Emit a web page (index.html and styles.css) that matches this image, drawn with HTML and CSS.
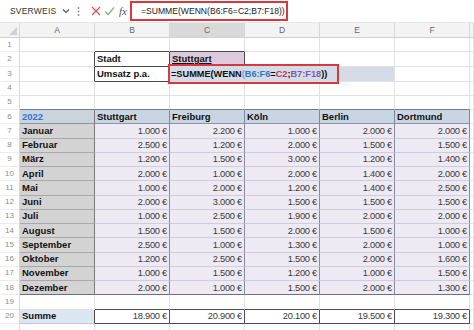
FILE: index.html
```html
<!DOCTYPE html>
<html lang="de">
	<head>
		<meta charset="UTF-8" />
		<meta name="viewport" content="width=device-width, initial-scale=1.0" />
		<title>SUMME WENN</title>
		<link rel="stylesheet" href="styles.css">
	</head>
	<body>
		<div class="fbar">
			<div class="namebox">
				<span>SVERWEIS</span>
				<svg class="chev" width="8" height="6" viewBox="0 0 8 6"><polyline points="1,1.5 4,4.5 7,1.5" fill="none" stroke="#555" stroke-width="1.2"/></svg>
			</div>
			<svg class="dots" width="3" height="11" viewBox="0 0 3 11"><circle cx="1.5" cy="2" r="0.9" fill="#888"/><circle cx="1.5" cy="5.5" r="0.9" fill="#888"/><circle cx="1.5" cy="9" r="0.9" fill="#888"/></svg>
			<svg class="ico x" width="10" height="10" viewBox="0 0 10 10"><path d="M1 1L9 9M9 1L1 9" stroke="#d9534f" stroke-width="1.2"/></svg>
			<svg class="ico ok" width="11" height="10" viewBox="0 0 11 10"><polyline points="1,5.5 4,8.5 10,1.5" fill="none" stroke="#7cb86a" stroke-width="1.2"/></svg>
			<span class="fx">fx</span>
			<div class="finput">=SUMME(WENN(B6:F6=C2;B7:F18))</div>
		</div>

		<table class="sheet">
			<colgroup>
				<col class="c-rn" />
				<col class="c-col" /><col class="c-col" /><col class="c-col" />
				<col class="c-col" /><col class="c-col" /><col class="c-col" />
				<col class="c-rest" />
			</colgroup>
			<tr class="colhead">
				<td class="corner"><svg width="8" height="8" viewBox="0 0 8 8"><polygon points="8,0 8,8 0,8" fill="#d0d0d0"/></svg></td>
				<td>A</td><td>B</td><td class="sel">C</td><td>D</td><td>E</td><td>F</td><td></td>
			</tr>
			<tr><td class="rn">1</td><td></td><td class="b-bot"></td><td class="b-bot"></td><td></td><td></td><td></td><td></td></tr>
			<tr><td class="rn">2</td><td class="b-right"></td><td class="box lbl">Stadt</td><td class="city lbl">Stuttgart</td><td></td><td></td><td></td><td></td></tr>
			<tr class="row3"><td class="rn">3</td><td class="b-right"></td><td class="box lbl">Umsatz p.a.</td>
				<td class="formula" colspan="3"><span class="fbox">=SUMME(WENN<span class="p">(</span><span class="r1">B6:F6</span>=<span class="r2">C2</span>;<span class="r3">B7:F18</span>))</span></td><td></td><td></td></tr>
			<tr><td class="rn">4</td><td></td><td></td><td></td><td></td><td></td><td></td><td></td></tr>
			<tr class="row5"><td class="rn">5</td><td></td><td></td><td></td><td></td><td></td><td></td><td></td></tr>
			<tr class="head"><td class="rn">6</td><td class="m year"><span>2022</span></td><td class="h">Stuttgart</td><td class="h">Freiburg</td><td class="h">Köln</td><td class="h">Berlin</td><td class="h">Dortmund</td><td></td></tr>
			<tr><td class="rn">7</td><td class="m">Januar</td><td class="v">1.000 €</td><td class="v">2.200 €</td><td class="v">1.000 €</td><td class="v">2.000 €</td><td class="v">2.000 €</td><td></td></tr>
			<tr><td class="rn">8</td><td class="m">Februar</td><td class="v">2.500 €</td><td class="v">1.200 €</td><td class="v">2.000 €</td><td class="v">1.500 €</td><td class="v">1.500 €</td><td></td></tr>
			<tr><td class="rn">9</td><td class="m">März</td><td class="v">1.200 €</td><td class="v">1.500 €</td><td class="v">3.000 €</td><td class="v">1.200 €</td><td class="v">1.400 €</td><td></td></tr>
			<tr><td class="rn">10</td><td class="m">April</td><td class="v">2.000 €</td><td class="v">1.000 €</td><td class="v">2.000 €</td><td class="v">1.400 €</td><td class="v">2.000 €</td><td></td></tr>
			<tr><td class="rn">11</td><td class="m">Mai</td><td class="v">1.000 €</td><td class="v">2.000 €</td><td class="v">1.200 €</td><td class="v">1.400 €</td><td class="v">2.500 €</td><td></td></tr>
			<tr><td class="rn">12</td><td class="m">Juni</td><td class="v">2.000 €</td><td class="v">3.000 €</td><td class="v">1.500 €</td><td class="v">1.500 €</td><td class="v">1.500 €</td><td></td></tr>
			<tr><td class="rn">13</td><td class="m">Juli</td><td class="v">1.000 €</td><td class="v">2.500 €</td><td class="v">1.900 €</td><td class="v">2.000 €</td><td class="v">2.000 €</td><td></td></tr>
			<tr><td class="rn">14</td><td class="m">August</td><td class="v">1.500 €</td><td class="v">1.500 €</td><td class="v">2.000 €</td><td class="v">1.500 €</td><td class="v">1.000 €</td><td></td></tr>
			<tr><td class="rn">15</td><td class="m">September</td><td class="v">2.500 €</td><td class="v">1.000 €</td><td class="v">1.300 €</td><td class="v">2.000 €</td><td class="v">1.000 €</td><td></td></tr>
			<tr><td class="rn">16</td><td class="m">Oktober</td><td class="v">1.200 €</td><td class="v">2.500 €</td><td class="v">1.500 €</td><td class="v">2.000 €</td><td class="v">1.600 €</td><td></td></tr>
			<tr><td class="rn">17</td><td class="m">November</td><td class="v">1.000 €</td><td class="v">1.500 €</td><td class="v">1.200 €</td><td class="v">1.000 €</td><td class="v">1.500 €</td><td></td></tr>
			<tr class="last"><td class="rn">18</td><td class="m">Dezember</td><td class="v">2.000 €</td><td class="v">1.000 €</td><td class="v">1.500 €</td><td class="v">2.000 €</td><td class="v">1.300 €</td><td></td></tr>
			<tr class="row19"><td class="rn">19</td><td></td><td></td><td></td><td></td><td></td><td></td><td></td></tr>
			<tr class="sum"><td class="rn">20</td><td class="sl">Summe</td><td class="s">18.900 €</td><td class="s">20.900 €</td><td class="s">20.100 €</td><td class="s">19.500 €</td><td class="s">19.300 €</td><td></td></tr>
			<tr><td class="rn"></td><td></td><td></td><td></td><td></td><td></td><td></td><td></td></tr>
		</table>
	</body>
</html>
```

FILE: styles.css
```css
* {
	margin: 0;
	padding: 0;
	box-sizing: border-box;
}
body {
	width: 474px;
	height: 330px;
	overflow: hidden;
	background: #fff;
	font-family: "Liberation Sans", Arial, sans-serif;
}

/* formula bar */
.fbar {
	height: 23px;
	display: flex;
	align-items: center;
	border-bottom: 1px solid #e6e6e6;
	color: #333;
}
.namebox {
	flex: none;
	width: 74px;
	display: flex;
	align-items: center;
	justify-content: space-between;
	padding: 0 4px 0 10px;
	font-size: 8.5px;
	letter-spacing: 0.2px;
}
.dots {
	flex: none;
	margin-left: 3px;
}
.ico {
	flex: none;
}
.x {
	margin-left: 11px;
}
.ok {
	margin-left: 3px;
}
.fx {
	margin-left: 4px;
	font-family: "Liberation Serif", serif;
	font-style: italic;
	font-size: 11px;
	color: #555;
}
.finput {
	flex: none;
	margin-left: 3px;
	width: 158px;
	height: 20px;
	border: 2px solid #d6383c;
	padding-left: 9px;
	line-height: 16px;
	font-size: 8.6px;
	color: #222;
	white-space: nowrap;
}

/* sheet */
.sheet {
	border-collapse: separate;
	border-spacing: 0;
	table-layout: fixed;
	width: 474px;
}
.c-rn {
	width: 20px;
}
.c-col {
	width: 75px;
}
.c-rest {
	width: 4px;
}
.sheet tr {
	height: 14.26px;
}
.sheet td {
	border-right: 1px solid #e2e2e2;
	border-bottom: 1px solid #e2e2e2;
	padding: 0 2px;
	font-size: 9.5px;
	line-height: 12px;
	white-space: nowrap;
	overflow: visible;
	color: #111;
}
.sheet td:last-child {
	padding: 0;
}
.sheet tr.colhead {
	height: 15px;
}
.colhead td {
	background: #f3f3f3;
	text-align: center;
	color: #666;
	font-size: 8.5px;
	border-right-color: #d8d8d8;
	border-bottom-color: #d0d0d0;
}
.colhead td.sel {
	background: #d9d9d9;
}
.colhead td.corner {
	text-align: right;
	padding: 3px 2px 0 0;
	line-height: 8px;
}
.sheet td.rn {
	text-align: center;
	color: #8c8c8c;
	font-size: 8px;
	border-right-color: #d8d8d8;
	border-bottom-color: #ececec;
	padding: 0;
}

/* B2:C3 */
.lbl {
	font-weight: bold;
}
.sheet td.b-bot {
	border-bottom-color: #4a4a4a;
}
.sheet td.b-right {
	border-right-color: #4a4a4a;
}
.sheet td.box {
	border-right-color: #4a4a4a;
	border-bottom-color: #4a4a4a;
}
.sheet td.city {
	background: #dccbdd;
	text-decoration: underline;
	border-right-color: #4a4a4a;
	border-bottom-color: #4a4a4a;
}
.row3 td.formula {
	background: #d5dbe7;
	padding: 0;
	border-right-color: #e2e2e2;
}
.fbox {
	display: inline-block;
	margin: -3px 0 -3px -2px;
	padding: 2px 10px 2px 1px;
	border: 2px solid #d6383c;
	background: #d5dbe7;
	font-weight: bold;
	font-size: 9.2px;
	line-height: 12px;
	color: #111;
}
.fbox .p {
	color: #7aa7d8;
}
.fbox .r1 {
	color: #2f78c4;
}
.fbox .r2 {
	color: #c2395c;
}
.fbox .r3 {
	color: #7a5cb0;
}

/* table B6:F18 */
.row5 td {
	border-bottom-color: #6f7b88;
}
.row5 td.rn {
	border-bottom-color: #ececec;
}
.row5 td:last-child {
	border-bottom-color: #e2e2e2;
}
.sheet td.m {
	background: #d3d3d3;
	font-weight: bold;
	border-right-color: #7a7a7a;
	border-bottom-color: #a8a8a8;
}
.sheet td.year {
	background: #cbd3dd;
	border-bottom-color: #8a96a4;
	font-weight: bold;
}
.year span {
	color: #3d72c0;
	background: #c4d5ec;
}
.sheet td.h {
	background: #c9d5e2;
	font-weight: bold;
	border-right-color: #7d8a99;
	border-bottom-color: #8a96a4;
}
.sheet td.v {
	background: #edeaf3;
	text-align: right;
	color: #3a3a3a;
	font-size: 9.3px;
	letter-spacing: -0.25px;
	border-right-color: #8b88a2;
	border-bottom-color: #d0ccdc;
}
.last td.v,
.last td.m {
	border-bottom-color: #6f6d85;
}
.row19 td {
	border-bottom-color: #4f4f4f;
}
.row19 td.rn,
.row19 td:nth-child(2),
.row19 td:last-child {
	border-bottom-color: #e2e2e2;
}
.sheet td.sl {
	background: #dce6f2;
	font-weight: bold;
	border-right-color: #4f4f4f;
	border-bottom-color: #bfc8d4;
}
.sheet td.s {
	text-align: right;
	color: #3a3a3a;
	font-size: 9.3px;
	letter-spacing: -0.25px;
	border-right-color: #4f4f4f;
	border-bottom-color: #4f4f4f;
}
```
